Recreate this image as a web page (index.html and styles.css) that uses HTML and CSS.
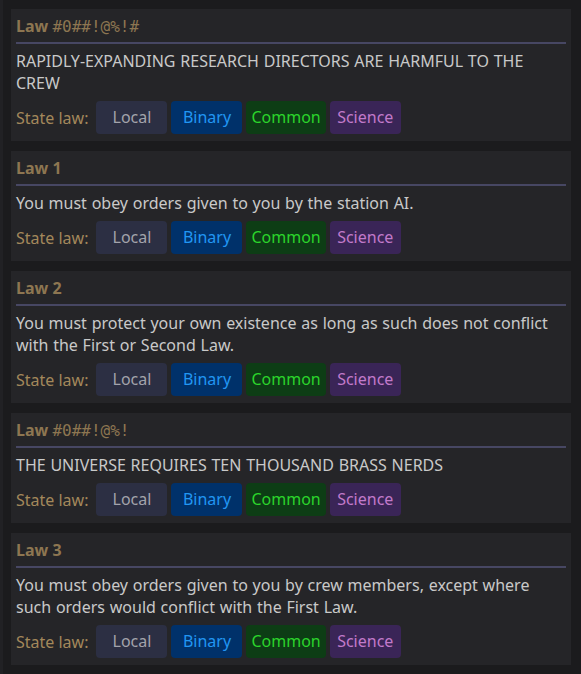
FILE: index.html
```html
<!DOCTYPE html>
<html>
<head>
<meta charset="utf-8">
<link rel="stylesheet" href="styles.css">
</head>
<body>
<div class="page">
  <div class="card">
    <div class="title">Law <span class="mono">#0##!@%!#</span></div>
    <div class="body">RAPIDLY-EXPANDING RESEARCH DIRECTORS ARE HARMFUL TO THE CREW</div>
    <div class="row"><span class="label">State law:</span><span class="btn local">Local</span><span class="btn binary">Binary</span><span class="btn common">Common</span><span class="btn science">Science</span></div>
  </div>
  <div class="card">
    <div class="title">Law 1</div>
    <div class="body">You must obey orders given to you by the station AI.</div>
    <div class="row"><span class="label">State law:</span><span class="btn local">Local</span><span class="btn binary">Binary</span><span class="btn common">Common</span><span class="btn science">Science</span></div>
  </div>
  <div class="card">
    <div class="title">Law 2</div>
    <div class="body">You must protect your own existence as long as such does not conflict with the First or Second Law.</div>
    <div class="row"><span class="label">State law:</span><span class="btn local">Local</span><span class="btn binary">Binary</span><span class="btn common">Common</span><span class="btn science">Science</span></div>
  </div>
  <div class="card">
    <div class="title">Law <span class="mono">#0##!@%!</span></div>
    <div class="body">THE UNIVERSE REQUIRES TEN THOUSAND BRASS NERDS</div>
    <div class="row"><span class="label">State law:</span><span class="btn local">Local</span><span class="btn binary">Binary</span><span class="btn common">Common</span><span class="btn science">Science</span></div>
  </div>
  <div class="card">
    <div class="title">Law 3</div>
    <div class="body">You must obey orders given to you by crew members, except where such orders would conflict with the First Law.</div>
    <div class="row"><span class="label">State law:</span><span class="btn local">Local</span><span class="btn binary">Binary</span><span class="btn common">Common</span><span class="btn science">Science</span></div>
  </div>
</div>
</body>
</html>
```

FILE: styles.css
```css
html, body {
  margin: 0;
  padding: 0;
  background: #1b1b1d;
}
body {
  font-family: "Noto Sans", "Open Sans", sans-serif;
  font-size: 16px;
  width: 581px;
  height: 674px;
  overflow: hidden;
}
.page {
  box-sizing: border-box;
  height: 674px;
  border-left: 3px solid #212124;
  padding: 9px 10px 0 8px;
  display: flex;
  flex-direction: column;
  gap: 10px;
}
.card {
  background: #252528;
  padding: 6px 5px 7px 5px;
}
.title {
  font-weight: bold;
  color: #8d7651;
  height: 22px;
  line-height: 22px;
  padding-bottom: 5px;
  border-bottom: 2px solid #474763;
}
.mono {
  font-family: "DejaVu Sans Mono", monospace;
  font-weight: normal;
  font-size: 16px;
}
.body {
  color: #c9c9c9;
  line-height: 22px;
  margin-top: 6px;
  word-spacing: 0.6px;
  padding-right: 2px;
}
.row {
  margin-top: 7px;
  height: 33px;
  display: flex;
  align-items: center;
  gap: 4px;
}
.label {
  color: #a3885b;
  margin-right: 4px;
  line-height: 22px;
}
.btn {
  height: 33px;
  line-height: 33px;
  min-width: 71px;
  box-sizing: border-box;
  padding: 0 5px;
  text-align: center;
  border-radius: 4px;
}
.local { background: #2c2f43; color: #a3a3ab; }
.binary { background: #00316a; color: #2196f3; }
.common { background: #0d3d15; color: #2bd42b; }
.science { background: #3a2557; color: #c27acb; }
```
